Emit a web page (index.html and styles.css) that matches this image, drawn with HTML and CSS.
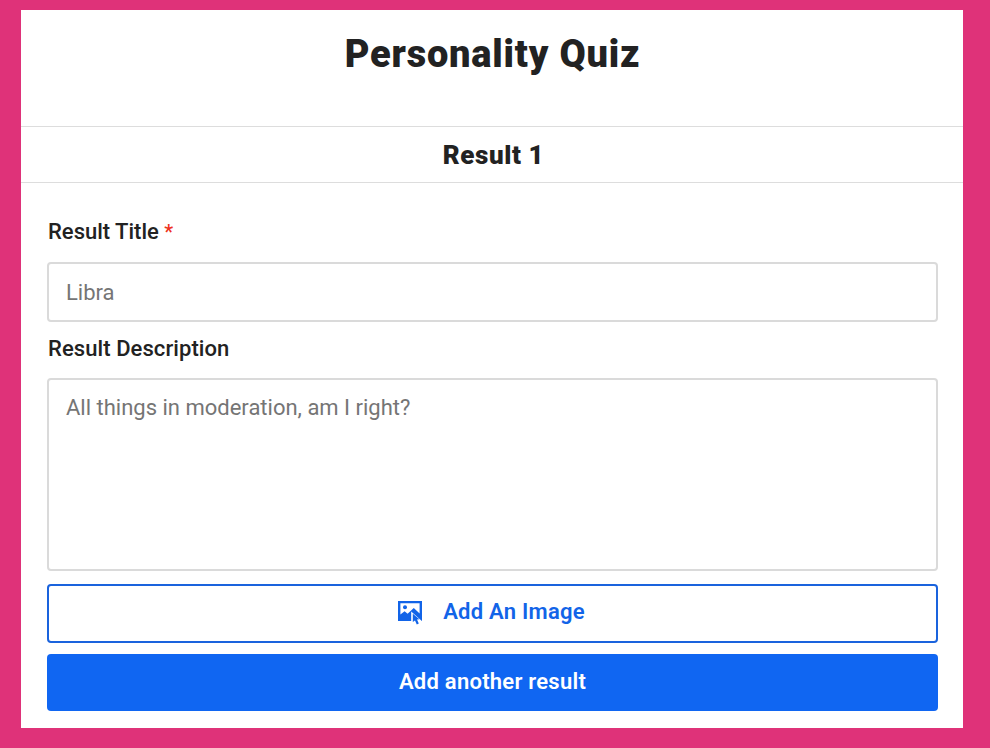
FILE: index.html
```html
<!DOCTYPE html>
<html lang="en">
<head>
    <meta charset="UTF-8">
    <meta name="viewport" content="width=device-width, initial-scale=1.0">
    <title>Personality Quiz</title>
    <link rel="stylesheet" href="styles.css">
</head>
<body>

    <main class="card">
        <h1>Personality Quiz</h1>
        <h2>Result 1</h2>

        <form class="result-form">
            <label for="title">Result Title <span class="required">*</span></label>
            <input type="text" id="title" name="title" placeholder="Libra" required>

            <label for="description" class="description-label">Result Description</label>
            <textarea id="description" name="description" placeholder="All things in moderation, am I right?"></textarea>

            <button type="button" class="btn-outline">
                <svg class="icon" viewBox="0 0 25 25" width="25" height="25" aria-hidden="true">
                    <path d="M0 1H24V21H0ZM2.4 3.2V14.6L6.6 11.2L9.6 13.8L15.8 8L21.6 13.4V3.2Z" fill="currentColor" fill-rule="evenodd"/>
                    <circle cx="7" cy="7.2" r="2" fill="currentColor"/>
                    <path d="M13.2 11.5L25 22V25H13.2Z" fill="#fff"/>
                    <path d="M14.8 13.8V22L17 20.4L18.8 24.4L20.8 23.5L19 19.6L21.4 19.2Z" fill="currentColor"/>
                </svg>
                <span>Add An Image</span>
            </button>
            <button type="submit" class="btn-primary">Add another result</button>
        </form>
    </main>

</body>
</html>
```
FILE: styles.css
```css
* {
    box-sizing: border-box;
}
body {
    margin: 0;
    padding: 10px 27px 20px 21px;
    height: 748px;
    background-color: #df3279;
    font-family: Roboto, "Liberation Sans", sans-serif;
    color: #222;
}
.card {
    height: 718px;
    background-color: #fff;
}
h1 {
    margin: 0;
    height: 116px;
    padding: 20px 0 0 1px;
    font-size: 38px;
    line-height: 48px;
    font-weight: 900;
    letter-spacing: 0.8px;
    text-align: center;
}
h2 {
    margin: 0;
    height: 57px;
    padding-left: 3px;
    border-top: 1px solid #ddd;
    border-bottom: 1px solid #ddd;
    font-size: 26px;
    line-height: 57px;
    font-weight: 900;
    letter-spacing: 0.6px;
    text-align: center;
}
.result-form {
    display: flex;
    flex-direction: column;
    padding: 34px 25px 0 26px;
}
label {
    height: 30px;
    margin-bottom: 15px;
    font-size: 22px;
    line-height: 30px;
    font-weight: 500;
    padding-left: 1px;
}
.description-label {
    margin-top: 11px;
    padding-top: 1px;
    letter-spacing: 0.08px;
}
.required {
    color: #ee3322;
    font-size: 20px;
}
input,
textarea {
    height: 60px;
    padding: 0 17px;
    border: 2px solid #dadada;
    border-radius: 4px;
    background-color: #fff;
    font-family: inherit;
    font-size: 22px;
    resize: none;
}
textarea {
    height: 193px;
    padding-top: 13px;
    line-height: 30px;
}
input::placeholder,
textarea::placeholder {
    color: #757575;
}
button {
    display: flex;
    align-items: center;
    justify-content: center;
    border-radius: 4px;
    font-family: inherit;
    font-size: 22px;
    font-weight: 600;
    letter-spacing: 0.25px;
    cursor: pointer;
}
.btn-outline {
    gap: 20px;
    height: 59px;
    margin-top: 13px;
    padding: 0 2px 4px 0;
    border: 2px solid #1a63dd;
    background-color: #fff;
    color: #1264e8;
}
.icon {
    margin-top: 2px;
}
.btn-primary {
    height: 57px;
    margin-top: 11px;
    padding: 0 0 2px;
    border: none;
    background-color: #1066f2;
    color: #fff;
}
```
